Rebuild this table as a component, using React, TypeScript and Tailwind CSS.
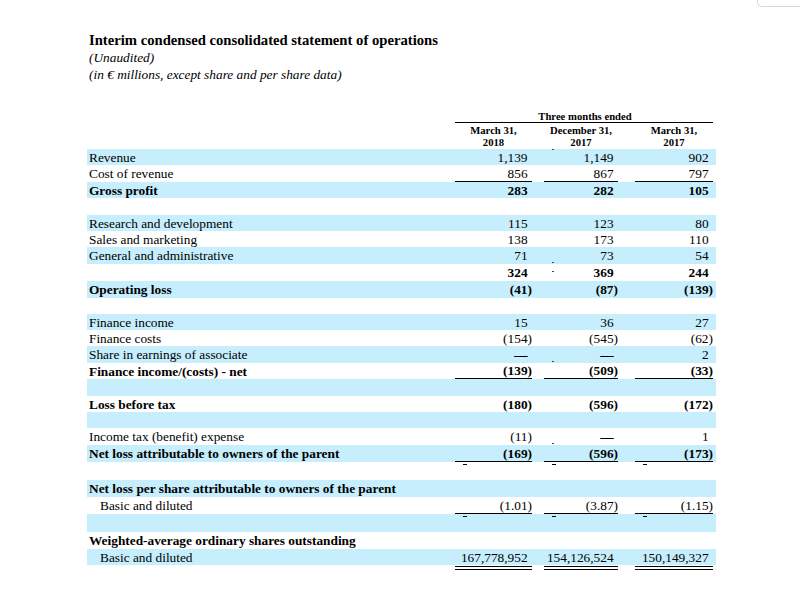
import React from "react";

type Row = {
  label?: string;
  vals?: string[];
  bold?: boolean;
  indent?: boolean;
  line?: "single";
  ticks?: boolean;
  dot?: "top" | "mid" | "bottom";
  h: number;
};

const ROWS: Row[] = [
  { label: "Revenue", vals: ["1,139", "1,149", "902"], dot: "top", h: 16 },
  { label: "Cost of revenue", vals: ["856", "867", "797"], line: "single", h: 17 },
  { label: "Gross profit", vals: ["283", "282", "105"], bold: true, h: 16 },
  { h: 17 },
  { label: "Research and development", vals: ["115", "123", "80"], h: 16 },
  { label: "Sales and marketing", vals: ["138", "173", "110"], h: 16 },
  { label: "General and administrative", vals: ["71", "73", "54"], dot: "bottom", h: 17 },
  { vals: ["324", "369", "244"], bold: true, dot: "mid", h: 17 },
  { label: "Operating loss", vals: ["(41)", "(87)", "(139)"], bold: true, h: 17 },
  { h: 16 },
  { label: "Finance income", vals: ["15", "36", "27"], h: 16 },
  { label: "Finance costs", vals: ["(154)", "(545)", "(62)"], h: 16 },
  { label: "Share in earnings of associate", vals: ["—", "—", "2"], dot: "bottom", h: 17 },
  { label: "Finance income/(costs) - net", vals: ["(139)", "(509)", "(33)"], bold: true, line: "single", h: 16 },
  { h: 17 },
  { label: "Loss before tax", vals: ["(180)", "(596)", "(172)"], bold: true, h: 16 },
  { h: 16 },
  { label: "Income tax (benefit) expense", vals: ["(11)", "—", "1"], dot: "bottom", h: 17 },
  { label: "Net loss attributable to owners of the parent", vals: ["(169)", "(596)", "(173)"], bold: true, line: "single", h: 17 },
  { h: 18, ticks: true },
  { label: "Net loss per share attributable to owners of the parent", bold: true, h: 17 },
  { label: "Basic and diluted", indent: true, vals: ["(1.01)", "(3.87)", "(1.15)"], line: "single", h: 17 },
  { h: 18, ticks: true },
  { label: "Weighted-average ordinary shares outstanding", bold: true, h: 17 },
  { label: "Basic and diluted", indent: true, vals: ["167,778,952", "154,126,524", "150,149,327"], h: 16 },
];

const GRID = "grid w-[629px] grid-cols-[368px_77px_12px_74px_17px_78px_3px]";

function Val({ v }: { v: string }) {
  if (v === "—") {
    return (
      <span className="whitespace-nowrap font-bold">
        —<span className="invisible">)</span>
      </span>
    );
  }
  const neg = v.startsWith("(");
  const body = neg ? v.slice(0, -1) : v;
  return (
    <span className="whitespace-nowrap">
      {body}
      <span className={neg ? "" : "invisible"}>)</span>
    </span>
  );
}

const DOT_POS = {
  top: "top-0",
  mid: "top-[7px]",
  bottom: "bottom-px",
};

function Cell({ v, row, dot }: { v?: string; row: Row; dot?: boolean }) {
  if (row.ticks) {
    return (
      <div className="pt-[2px] pl-[8px]">
        <div className="w-[4px] h-px bg-black" />
      </div>
    );
  }
  return (
    <div className={"relative flex items-center justify-end " + (row.line === "single" ? "border-b border-black" : "")}>
      {dot && row.dot && <span className={"absolute left-[8px] w-[2px] h-px bg-[#444] " + DOT_POS[row.dot]} />}
      {v && <Val v={v} />}
    </div>
  );
}

export default function App() {
  return (
    <div className="relative w-[800px] h-[595px] overflow-hidden bg-white text-black font-['Liberation_Serif',serif]">
      {/* browser chrome corner */}
      <div className="absolute top-0 right-0 w-[43px] h-[7px] border-l border-b border-[#d6d6d6] rounded-bl-[5px]" />

      <div className="pl-[87px] pt-[31px]">
        <div className="pl-[2px]">
          <h1 className="text-[14.67px] leading-[18px] font-bold">Interim condensed consolidated statement of operations</h1>
          <p className="text-[13.33px] leading-[17px] italic">(Unaudited)</p>
          <p className="text-[13.33px] leading-[17px] italic">(in € millions, except share and per share data)</p>
        </div>

        {/* column headers */}
        <div className="mt-[27px] ml-[368px] w-[258px] text-[10.67px] font-bold leading-[12px]">
          <div className="text-center border-b border-black pl-[2px]">Three months ended</div>
        </div>
        <div className={GRID + " text-[10.67px] font-bold leading-[12px] pt-px"}>
          <div />
          <div className="text-center">March 31,<br />2018</div>
          <div />
          <div className="text-center">December 31,<br />2017</div>
          <div />
          <div className="text-center">March 31,<br />2017</div>
          <div />
        </div>

        {/* rows */}
        <div className="mt-px text-[13.33px] leading-[15px]">
          {ROWS.map((r, i) => (
            <div
              key={i}
              className={GRID + (i % 2 === 0 ? " bg-[#c6eefc]" : "") + (r.bold ? " font-bold" : "")}
              style={{ height: r.h }}
            >
              <div className={"flex items-center whitespace-nowrap " + (r.indent ? "pl-[13px]" : "pl-[2px]")}>{r.label}</div>
              <Cell v={r.vals?.[0]} row={r} />
              <div />
              <Cell v={r.vals?.[1]} row={r} dot />
              <div />
              <Cell v={r.vals?.[2]} row={r} />
              <div />
            </div>
          ))}
          {/* double underline under the share counts */}
          <div className={GRID + " pt-px"}>
            <div />
            <div className="h-[4px] border-y border-black" />
            <div />
            <div className="h-[4px] border-y border-black" />
            <div />
            <div className="h-[4px] border-y border-black" />
            <div />
          </div>
        </div>
      </div>
    </div>
  );
}
